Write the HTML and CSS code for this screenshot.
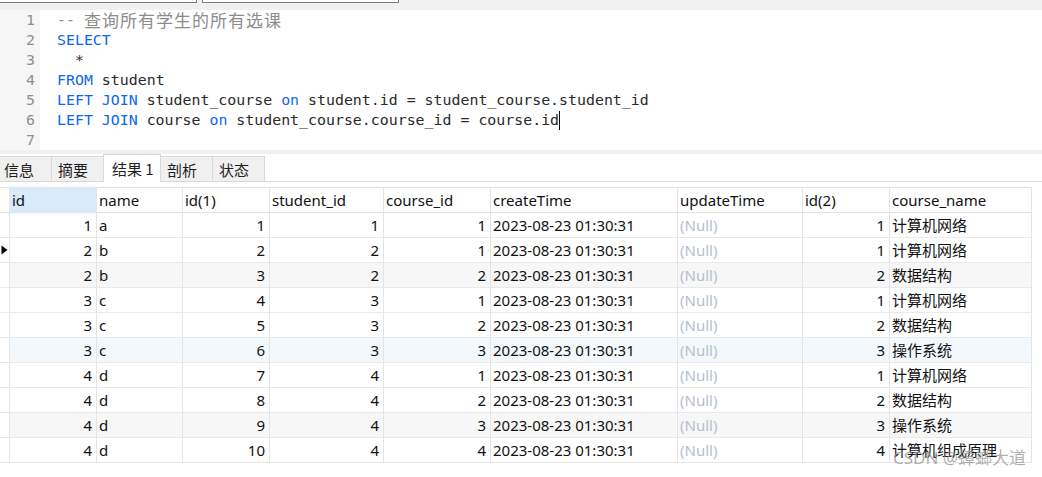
FILE: index.html
```html
<!DOCTYPE html>
<html lang="zh">
<head>
<meta charset="utf-8">
<title>查询结果</title>
<link rel="stylesheet" href="styles.css">
</head>
<body>
<div class="app">
  <div class="topbar">
    <div class="box box-a"></div>
    <div class="box box-b"></div>
  </div>

  <div class="editor">
    <div class="gutter">
      <div class="ln">1</div><div class="ln">2</div><div class="ln">3</div><div class="ln">4</div><div class="ln">5</div><div class="ln">6</div><div class="ln">7</div>
    </div>
    <div class="code">
      <div class="line"><span class="cm">-- <span class="cjk">查询所有学生的所有选课</span></span></div>
      <div class="line"><span class="kw">SELECT</span></div>
      <div class="line">  *</div>
      <div class="line"><span class="kw">FROM</span> student</div>
      <div class="line"><span class="kw">LEFT JOIN</span> student_course <span class="kw">on</span> student.id = student_course.student_id</div>
      <div class="line"><span class="kw">LEFT JOIN</span> course <span class="kw">on</span> student_course.course_id = course.id<span class="caret"></span></div>
      <div class="line"></div>
    </div>
  </div>

  <div class="sep"></div>

  <div class="tabbar">
    <div class="tab">信息</div>
    <div class="tab">摘要</div>
    <div class="tab active">结果 1</div>
    <div class="tab">剖析</div>
    <div class="tab">状态</div>
  </div>

  <div class="gap"></div>

  <div class="grid">
    <div class="row head">
      <div class="c ind"></div>
      <div class="c sel">id</div>
      <div class="c">name</div>
      <div class="c">id(1)</div>
      <div class="c">student_id</div>
      <div class="c">course_id</div>
      <div class="c">createTime</div>
      <div class="c">updateTime</div>
      <div class="c">id(2)</div>
      <div class="c">course_name</div>
    </div>

    <div class="row">
      <div class="c ind"></div>
      <div class="c num">1</div><div class="c">a</div><div class="c num">1</div><div class="c num">1</div><div class="c num">1</div>
      <div class="c">2023-08-23 01:30:31</div><div class="c null">(Null)</div><div class="c num">1</div><div class="c">计算机网络</div>
    </div>
    <div class="row">
      <div class="c ind"><svg class="arrow" width="7" height="10" viewBox="0 0 7 10"><polygon points="0.5,0.5 6.5,5 0.5,9.5" fill="#000"/></svg></div>
      <div class="c num">2</div><div class="c">b</div><div class="c num">2</div><div class="c num">2</div><div class="c num">1</div>
      <div class="c">2023-08-23 01:30:31</div><div class="c null">(Null)</div><div class="c num">1</div><div class="c">计算机网络</div>
    </div>
    <div class="row shade">
      <div class="c ind"></div>
      <div class="c num">2</div><div class="c">b</div><div class="c num">3</div><div class="c num">2</div><div class="c num">2</div>
      <div class="c">2023-08-23 01:30:31</div><div class="c null">(Null)</div><div class="c num">2</div><div class="c">数据结构</div>
    </div>
    <div class="row">
      <div class="c ind"></div>
      <div class="c num">3</div><div class="c">c</div><div class="c num">4</div><div class="c num">3</div><div class="c num">1</div>
      <div class="c">2023-08-23 01:30:31</div><div class="c null">(Null)</div><div class="c num">1</div><div class="c">计算机网络</div>
    </div>
    <div class="row">
      <div class="c ind"></div>
      <div class="c num">3</div><div class="c">c</div><div class="c num">5</div><div class="c num">3</div><div class="c num">2</div>
      <div class="c">2023-08-23 01:30:31</div><div class="c null">(Null)</div><div class="c num">2</div><div class="c">数据结构</div>
    </div>
    <div class="row hover">
      <div class="c ind"></div>
      <div class="c num">3</div><div class="c">c</div><div class="c num">6</div><div class="c num">3</div><div class="c num">3</div>
      <div class="c">2023-08-23 01:30:31</div><div class="c null">(Null)</div><div class="c num">3</div><div class="c">操作系统</div>
    </div>
    <div class="row">
      <div class="c ind"></div>
      <div class="c num">4</div><div class="c">d</div><div class="c num">7</div><div class="c num">4</div><div class="c num">1</div>
      <div class="c">2023-08-23 01:30:31</div><div class="c null">(Null)</div><div class="c num">1</div><div class="c">计算机网络</div>
    </div>
    <div class="row">
      <div class="c ind"></div>
      <div class="c num">4</div><div class="c">d</div><div class="c num">8</div><div class="c num">4</div><div class="c num">2</div>
      <div class="c">2023-08-23 01:30:31</div><div class="c null">(Null)</div><div class="c num">2</div><div class="c">数据结构</div>
    </div>
    <div class="row shade">
      <div class="c ind"></div>
      <div class="c num">4</div><div class="c">d</div><div class="c num">9</div><div class="c num">4</div><div class="c num">3</div>
      <div class="c">2023-08-23 01:30:31</div><div class="c null">(Null)</div><div class="c num">3</div><div class="c">操作系统</div>
    </div>
    <div class="row">
      <div class="c ind"></div>
      <div class="c num">4</div><div class="c">d</div><div class="c num">10</div><div class="c num">4</div><div class="c num">4</div>
      <div class="c">2023-08-23 01:30:31</div><div class="c null">(Null)</div><div class="c num">4</div><div class="c">计算机组成原理</div>
    </div>
  </div>

  <div class="watermark">CSDN @蟑螂大道</div>
</div>
</body>
</html>
```

FILE: styles.css
```css
html, body {
  margin: 0;
  padding: 0;
  background: #ffffff;
}

body {
  width: 1042px;
  height: 477px;
  overflow: hidden;
}

.app {
  position: relative;
  width: 1042px;
  height: 477px;
  background: #ffffff;
}

/* top strip */
.topbar {
  height: 10px;
  background: #f0f0f0;
  display: flex;
  gap: 5px;
  align-items: flex-start;
}

.box {
  height: 3px;
  box-sizing: border-box;
  background: #ffffff;
  border-bottom: 1px solid #7c7c7c;
  border-right: 1px solid #7c7c7c;
}

.box-a {
  width: 197px;
}

.box-b {
  width: 197px;
  border-left: 1px solid #7c7c7c;
}

/* editor */
.editor {
  display: flex;
  height: 140px;
  font-family: "DejaVu Sans Mono", "Liberation Mono", monospace;
  font-size: 14.9px;
  line-height: 20px;
}

.gutter {
  width: 40px;
  box-sizing: border-box;
  background: #f6f6f6;
  color: #8e8e8e;
  text-align: right;
  padding-right: 5px;
}

.ln {
  height: 20px;
}

.code {
  padding-left: 17px;
  color: #2a2a2a;
}

.line {
  height: 20px;
  white-space: pre;
}

.kw {
  color: #0d66f2;
}

.cm {
  color: #8c8c8c;
}

.cjk {
  font-family: "Noto Sans CJK SC", sans-serif;
  font-size: 17px;
  letter-spacing: 1px;
  vertical-align: top;
  line-height: 20px;
}

.caret {
  display: inline-block;
  width: 1px;
  height: 19px;
  margin-top: 1px;
  background: #000000;
  vertical-align: top;
}

/* separator */
.sep {
  height: 4px;
  background: #f0f0f0;
}

/* tabs */
.tabbar {
  height: 27px;
  border-bottom: 1px solid #d8d8d8;
  display: flex;
  align-items: flex-end;
  font-family: "Noto Sans CJK SC", "Noto Sans", sans-serif;
  font-size: 15px;
  color: #1e1e1e;
}

.tab {
  width: 52px;
  height: 25px;
  box-sizing: border-box;
  padding-left: 6px;
  background: #f0f0f0;
  border-top: 1px solid #d8d8d8;
  border-right: 1px solid #d8d8d8;
  display: flex;
  align-items: center;
  white-space: nowrap;
}

.tab:first-child {
  padding-left: 4px;
}

.tab.active {
  width: 58px;
  height: 28px;
  margin-bottom: -1px;
  padding-left: 8px;
  background: #ffffff;
  border-left: 1px solid #d8d8d8;
  border-top: 1px solid #d8d8d8;
  border-right: 1px solid #d8d8d8;
  margin-left: -1px;
}

.gap {
  height: 5px;
}

/* result grid */
.grid {
  width: 1032px;
  border-top: 1px solid #e2e2e2;
  font-family: "Noto Sans", "Noto Sans CJK SC", sans-serif;
  font-size: 15px;
  color: #111111;
}

.row {
  display: grid;
  grid-template-columns: 10px 87px 86px 87px 114px 107px 187px 125px 87px 142px;
  height: 25px;
}

.c {
  box-sizing: border-box;
  height: 25px;
  line-height: 24px;
  padding: 0 2px;
  border-right: 1px solid #e4e4e4;
  border-bottom: 1px solid #e9e9e9;
  white-space: nowrap;
  overflow: hidden;
}

.head .c {
  border-bottom-color: #e2e2e2;
}

.c.ind {
  padding: 0;
  background: #ffffff;
  display: flex;
  align-items: center;
}

.arrow {
  display: block;
  margin-left: 1px;
}

.c.num {
  text-align: right;
  padding-right: 4px;
}

.c.sel {
  background: #d9eaf8;
}

.c.null {
  color: #b6bfd0;
}

.row.shade .c:not(.ind) {
  background: #f7f7f7;
}

.row.hover .c:not(.ind) {
  background: #f3f8fd;
}

/* watermark */
.watermark {
  position: absolute;
  left: 893px;
  top: 446px;
  font-family: "Noto Sans", "Noto Sans CJK SC", sans-serif;
  font-size: 17px;
  line-height: 24px;
  color: rgba(150, 150, 150, 0.75);
  white-space: nowrap;
}
```
